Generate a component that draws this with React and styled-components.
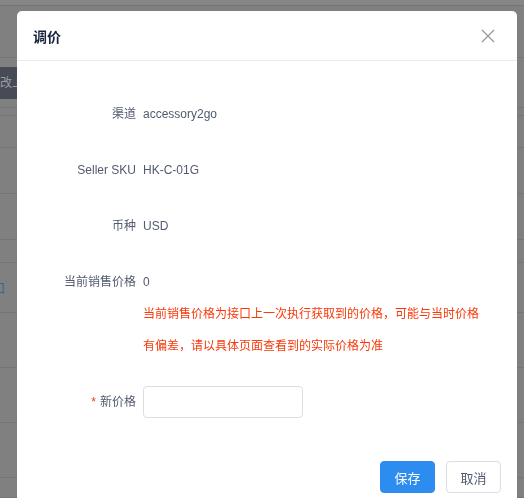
import React from "react"
import styled, { createGlobalStyle } from "styled-components"

const GlobalStyle = createGlobalStyle`
  html, body {
    margin: 0;
    padding: 0;
    background: #808080;
    font-family: "Liberation Sans", "Noto Sans CJK SC", sans-serif;
    overflow: hidden;
  }
`

// dimmed page behind the modal mask
const Page = styled.div`
  height: 498px;
  overflow: hidden;
  background: #808080;
`

const BgRow = styled.div`
  box-sizing: border-box;
  height: ${(p) => p.h}px;
  border-bottom: 1px solid #757575;
  background: ${(p) => (p.light ? "#868686" : "transparent")};
  display: flex;
  align-items: center;
  font-size: 12px;
`

const DarkButton = styled.div`
  height: 32px;
  margin-left: -2px;
  padding: 0 12px 0 2px;
  background: #474b55;
  color: #9a9ca2;
  line-height: 32px;
  font-size: 12px;
`

const LinkGlyph = styled.span`
  margin-left: -7px;
  color: #3e5f8c;
  font-size: 12px;
`

const Mask = styled.div`
  position: fixed;
  inset: 0;
  padding: 11px 0 0 17px;
`

const Dialog = styled.div`
  width: 500px;
  background: #fff;
  border-radius: 5px 5px 0 0;
  overflow: hidden;
`

const Header = styled.div`
  height: 50px;
  box-sizing: border-box;
  padding: 0 16px;
  border-bottom: 1px solid #e8eaec;
  display: flex;
  align-items: center;
  justify-content: space-between;
`

const Title = styled.div`
  font-size: 14px;
  font-weight: bold;
  color: #17233d;
  padding-top: 1px;
`

const Close = styled.div`
  width: 14px;
  height: 14px;
  margin-right: 6px;
  display: flex;
`

const Body = styled.div`
  padding: 37px 16px 29px 0;
`

const Row = styled.div`
  display: flex;
  margin-bottom: ${(p) => (p.last ? 0 : 24)}px;
`

const Label = styled.div`
  width: 126px;
  box-sizing: border-box;
  padding-right: 7px;
  text-align: right;
  line-height: 32px;
  font-size: 12px;
  color: #515a6e;
  flex-shrink: 0;
`

const Star = styled.span`
  color: #ed4014;
  margin-right: 4px;
`

const Value = styled.div`
  line-height: 32px;
  font-size: 12px;
  color: #515a6e;
`

const Note = styled.div`
  width: 340px;
  color: #f8390a;
  line-height: 32px;
  font-size: 12px;
`

const Input = styled.input`
  box-sizing: border-box;
  width: 160px;
  height: 32px;
  border: 1px solid #dcdee2;
  border-radius: 4px;
  outline: none;
  padding: 4px 7px;
  font-size: 12px;
`

const Footer = styled.div`
  padding: 14px 16px;
  display: flex;
  justify-content: flex-end;
  gap: 11px;
`

const Button = styled.button`
  width: 55px;
  height: 32px;
  padding: 0;
  font-size: 13px;
  font-family: inherit;
  border-radius: 4px;
  border: 1px solid ${(p) => (p.primary ? "#2d8cf0" : "#dcdee2")};
  background: ${(p) => (p.primary ? "#2d8cf0" : "#fff")};
  color: ${(p) => (p.primary ? "#fff" : "#515a6e")};
  cursor: pointer;
`

const bgRows = [
  { h: 6, light: true },
  { h: 52 },
  { h: 50, button: true },
  { h: 8 },
  { h: 32 },
  { h: 46 },
  { h: 46 },
  { h: 23 },
  { h: 50, link: true },
  { h: 55 },
  { h: 55 },
  { h: 55 },
  { h: 20 },
]

export default function App() {
  return (
    <>
      <GlobalStyle />
      <Page>
        {bgRows.map((r, i) => (
          <BgRow key={i} h={r.h} light={r.light}>
            {r.button && <DarkButton>改上架</DarkButton>}
            {r.link && <LinkGlyph>口</LinkGlyph>}
          </BgRow>
        ))}
      </Page>
      <Mask>
        <Dialog>
          <Header>
            <Title>调价</Title>
            <Close>
              <svg width="14" height="14" viewBox="0 0 14 14">
                <path d="M1 1L13 13M13 1L1 13" stroke="#999" strokeWidth="1.3" />
              </svg>
            </Close>
          </Header>
          <Body>
            <Row>
              <Label>渠道</Label>
              <Value>accessory2go</Value>
            </Row>
            <Row>
              <Label>Seller SKU</Label>
              <Value>HK-C-01G</Value>
            </Row>
            <Row>
              <Label>币种</Label>
              <Value>USD</Value>
            </Row>
            <Row>
              <Label>当前销售价格</Label>
              <Value>
                0
                <Note>当前销售价格为接口上一次执行获取到的价格，可能与当时价格有偏差，请以具体页面查看到的实际价格为准</Note>
              </Value>
            </Row>
            <Row last>
              <Label>
                <Star>*</Star>新价格
              </Label>
              <Input />
            </Row>
          </Body>
          <Footer>
            <Button primary>保存</Button>
            <Button>取消</Button>
          </Footer>
        </Dialog>
      </Mask>
    </>
  )
}
